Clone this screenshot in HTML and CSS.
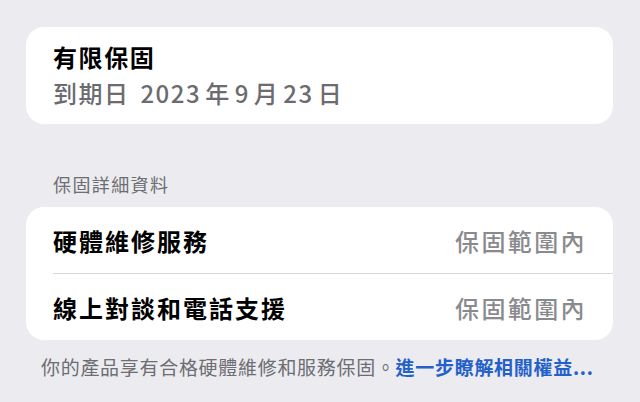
FILE: index.html
```html
<!DOCTYPE html>
<html lang="zh-Hant">
<head>
  <meta charset="UTF-8">
  <meta name="viewport" content="width=device-width, initial-scale=1.0">
  <title>保固</title>
  <link rel="stylesheet" href="styles.css">
</head>
<body>
  <main class="page">
    <section class="card summary">
      <div class="summary-title">有限保固</div>
      <div class="summary-date">到期日 <span class="num">2023</span>年<span class="num">9</span>月<span class="num">23</span>日</div>
    </section>

    <h2 class="section-header">保固詳細資料</h2>
    <section class="card list">
      <div class="row">
        <span class="row-label">硬體維修服務</span>
        <span class="row-value">保固範圍內</span>
      </div>
      <div class="row">
        <span class="row-label">線上對談和電話支援</span>
        <span class="row-value">保固範圍內</span>
      </div>
    </section>

    <p class="footer-note">你的產品享有合格硬體維修和服務保固。<a href="#" class="more-link">進一步瞭解相關權益...</a></p>
  </main>
</body>
</html>
```

FILE: styles.css
```css
/* General Styles */
body {
  margin: 0;
  padding: 0;
  background-color: #ebebf0;
  font-family: "Noto Sans CJK TC", "Noto Sans", sans-serif;
  color: #000;
}

.page {
  display: flex;
  flex-direction: column;
  padding: 27px 27px 0 26px;
}

.card {
  background-color: #fff;
  border-radius: 18px;
}

/* Summary card */
.summary {
  padding: 12px 27px 13px;
}

.summary-title {
  font-size: 24px;
  line-height: 36px;
  font-weight: 600;
  letter-spacing: 1.6px;
}

.summary-date {
  font-size: 24px;
  line-height: 36px;
  font-weight: 500;
  color: #6b6b70;
  letter-spacing: 1.5px;
}

.summary-date .num {
  margin: 0 4px;
}

/* Details list */
.section-header {
  margin: 49px 0 12px;
  padding-left: 27px;
  font-size: 18px;
  line-height: 22px;
  font-weight: 400;
  color: #6d6d72;
  letter-spacing: 1.4px;
}

.list {
  display: flex;
  flex-direction: column;
}

.row {
  display: flex;
  justify-content: space-between;
  align-items: center;
  height: 66px;
  margin-left: 27px;
  padding-right: 26px;
}

.row + .row {
  border-top: 1px solid #d8d8dc;
}

.row-label {
  font-size: 24px;
  font-weight: 600;
  letter-spacing: 2px;
}

.row-value {
  font-size: 24px;
  font-weight: 500;
  color: #8a8a8e;
  letter-spacing: 2.4px;
}

.footer-note {
  margin: 15px 0 0;
  padding-left: 15px;
  font-size: 19px;
  line-height: 24px;
  color: #6d6d72;
  letter-spacing: 0.7px;
  white-space: nowrap;
}

.more-link {
  color: #2360c8;
  font-weight: 600;
  text-decoration: none;
}
```
